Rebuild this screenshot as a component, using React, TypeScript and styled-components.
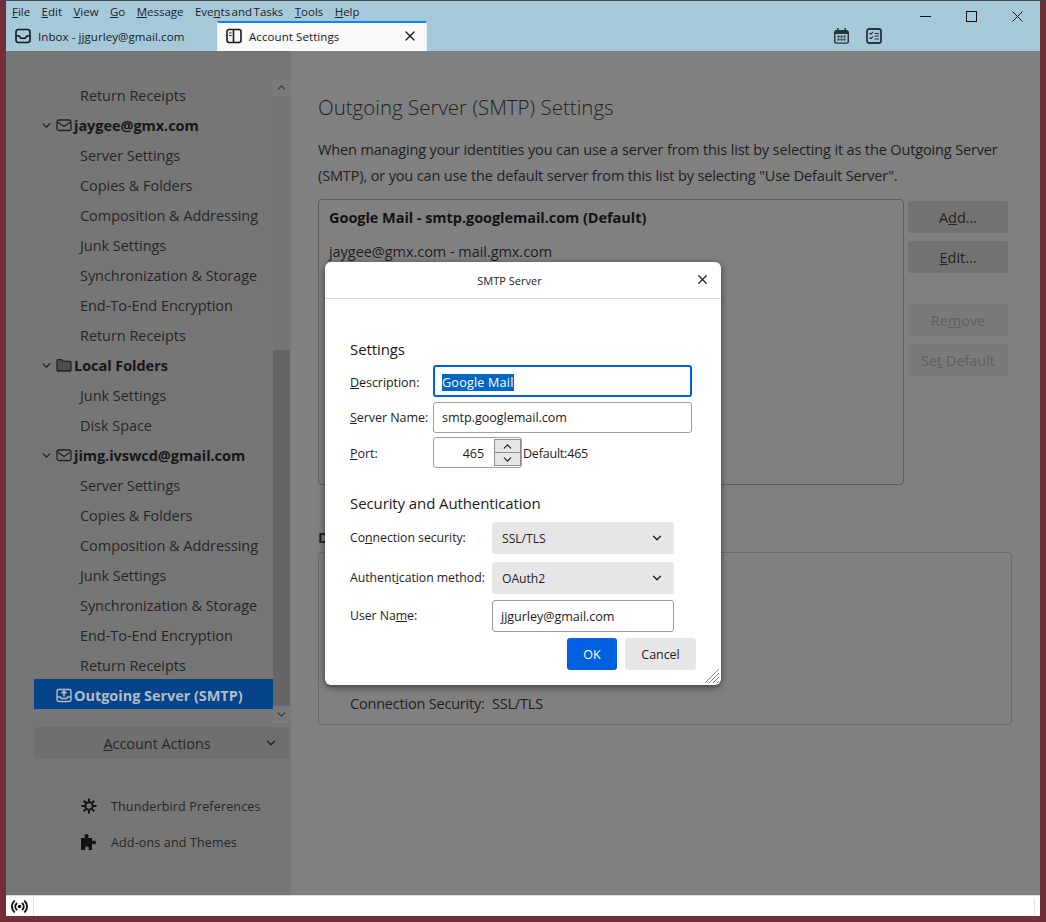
import React from "react";
import styled, { createGlobalStyle } from "styled-components";
import { ChevronDown, ChevronUp, X } from "lucide-react";

const Global = createGlobalStyle`
  html, body { margin: 0; padding: 0; background: #722e39; }
  body { font-family: "Open Sans", "Noto Sans", sans-serif; color: #1a1a1a; }
  * { box-sizing: border-box; }
`;

const Frame = styled.div`
  position: relative; width: 1046px; height: 922px; overflow: hidden;
  background: #722e39; border-top: 1px solid #3b4a50;
  padding: 0 6px 6px; display: flex; flex-direction: column;
`;
const TitleBar = styled.header`
  height: 50px; background: #a6c9da; display: grid;
  grid-template-columns: 1fr 138px; grid-template-rows: 20px 30px; flex: none;
`;
const MenuBar = styled.nav`
  display: flex; gap: 11.4px; padding-left: 6px; align-items: center;
  font-size: 11.5px; color: #1c2226; height: 20px; word-spacing: -1.5px;
`;
const WindowControls = styled.div`
  grid-column: 2; grid-row: 1 / span 2; display: flex; height: 30px;
`;
const WinButton = styled.div`
  width: 46px; height: 30px; display: flex; align-items: center; justify-content: center; color: #111;
`;
const TabStrip = styled.div`
  display: flex; align-items: flex-end; height: 30px;
`;
const Tab = styled.div<{ $active?: boolean }>`
  width: 210px; height: 30px; display: flex; align-items: center; gap: 7px; padding: 0 9px;
  font-size: 11.5px; color: #15191c; letter-spacing: 0.08px;
  ${(p) => p.$active && `
    margin-left: 1px; background: #f9f9fa; border-top: 2px solid #0a84ff;
    border-left: 1px solid #e8edf0; border-right: 1px solid #e8edf0; padding: 0 8px 2px 8px;
  `}
`;
const TabClose = styled.span`
  margin-left: auto; display: flex;
`;
const Tools = styled.div`
  margin-left: auto; margin-right: 20px; display: flex; gap: 17px; align-items: center; height: 30px;
`;
const Body = styled.div`
  flex: 1; display: flex; min-height: 0; background: #808080;
`;
const Sidebar = styled.aside`
  width: 285px; background: #767676; padding: 28px 1px 0 28px; display: flex; flex-direction: column; flex: none;
`;
const TreeArea = styled.div`
  display: flex; height: 644px; flex: none;
`;
const Tree = styled.div`
  flex: 1; overflow: hidden;
`;
const SubRow = styled.div`
  height: 30px; display: flex; align-items: center; padding: 2px 0 0 46px;
  font-size: 14.5px; letter-spacing: -0.05px; color: #262626; white-space: nowrap;
`;
const AccountRow = styled.div<{ $selected?: boolean }>`
  height: 30px; display: flex; align-items: center; padding: 2px 0 0 6px; white-space: nowrap;
  font-size: 14.5px; font-weight: 700; letter-spacing: -0.05px;
  color: ${(p) => (p.$selected ? "#b3bbc4" : "#161616")};
  background: ${(p) => (p.$selected ? "#05448a" : "transparent")};
`;
const Twisty = styled.span`
  width: 16px; display: flex; align-items: center; flex: none; color: #1c1c1c;
`;
const RowIcon = styled.span`
  width: 18px; display: flex; align-items: center; flex: none;
`;
const Scrollbar = styled.div`
  width: 17px; display: flex; flex-direction: column; flex: none;
`;
const ScrollArrow = styled.div`
  height: 17px; background: #7a7a7a; display: flex; align-items: center; justify-content: center; color: #3c3c3c; flex: none;
`;
const ScrollTrack = styled.div`
  flex: 1; display: flex; flex-direction: column; justify-content: flex-end; background: #757575;
`;
const ScrollThumb = styled.div`
  background: #666; flex: none;
`;
const ActionsButton = styled.div`
  margin-top: 4px; height: 32px; background: #6f6f6f; border-radius: 3px; display: flex; align-items: center;
  font-size: 14.5px; letter-spacing: -0.05px; color: #262626; flex: none;
`;
const ActionsLabel = styled.span`
  flex: 1; text-align: center; padding-left: 16px;
`;
const ActionsChevron = styled.span`
  display: flex; margin-right: 12px;
`;
const SideFooter = styled.div`
  margin-top: 29px; padding-left: 47px; display: flex; flex-direction: column;
`;
const FooterLink = styled.div`
  height: 36px; display: flex; align-items: center; gap: 14px; font-size: 12.5px; color: #262626; letter-spacing: 0.15px;
`;
const Content = styled.main`
  flex: 1; padding: 41px 28px 0 27px; color: #1f1f1f; min-width: 0;
`;
const PageTitle = styled.h1`
  margin: 0; font-size: 20.5px; line-height: 30px; font-weight: 300; color: #222; letter-spacing: 0;
`;
const Intro = styled.p`
  margin: 15px 0 0; font-size: 14.5px; line-height: 26px; letter-spacing: -0.14px; color: #1e1e1e; white-space: nowrap;
`;
const ServerArea = styled.div`
  margin-top: 10px; display: flex; gap: 4px;
`;
const ServerList = styled.div`
  width: 586px; height: 286px; border: 1px solid #5c5c5c; border-radius: 4px; font-size: 14.5px; letter-spacing: -0.05px;
`;
const ServerItem = styled.div<{ $default?: boolean }>`
  height: 35px; padding: 0 0 ${(p) => (p.$default ? "0" : "2px")} 10px; display: flex; align-items: center; white-space: nowrap;
  font-weight: ${(p) => (p.$default ? 700 : 400)};
  color: ${(p) => (p.$default ? "#121212" : "#1e1e1e")};
`;
const ServerButtons = styled.div`
  width: 100px; padding-top: 2px; display: flex; flex-direction: column; gap: 8px;
`;
const SideButton = styled.div<{ $disabled?: boolean; $gapBefore?: boolean }>`
  height: 32px; border-radius: 3px; display: flex; align-items: center; justify-content: center;
  font-size: 14.5px; letter-spacing: -0.05px;
  background: ${(p) => (p.$disabled ? "#7a7a7a" : "#727272")};
  color: ${(p) => (p.$disabled ? "#5f5f5f" : "#222")};
  margin-top: ${(p) => (p.$gapBefore ? "23px" : "0")};
`;
const DetailsHeading = styled.h2`
  margin: 41px 0 2px; font-size: 14.5px; line-height: 24px; font-weight: 700; color: #222;
`;
const DetailsBox = styled.div`
  width: 694px; height: 173px; border: 1px solid #6a6a6a; border-radius: 4px; display: flex; align-items: flex-end;
  padding: 0 0 11px 31px; font-size: 14.5px; letter-spacing: -0.2px; color: #1e1e1e;
`;
const DetailLabel = styled.span`
  width: 142px; white-space: nowrap;
`;
const StatusBar = styled.footer`
  height: 21px; background: #fff; border-top: 1px solid #dadada; display: flex; flex: none;
`;
const StatusCell = styled.div`
  width: 28px; border-right: 1px solid #e3e3e3; display: flex; align-items: center; justify-content: center;
`;
const StatusFill = styled.div`
  flex: 1; margin-right: 5px; border-right: 1px solid #e3e3e3; margin-top: 2px; margin-bottom: 2px;
`;
const Dialog = styled.section`
  position: absolute; left: 325px; top: 261px; width: 396px; height: 423px; background: #fff; border-radius: 6px;
  box-shadow: 0 2px 7px rgba(0,0,0,.55); color: #1d1d1d; display: flex; flex-direction: column;
`;
const DialogHeader = styled.div`
  height: 37px; border-bottom: 1px solid #d8d8d8; display: flex; align-items: center; justify-content: center; position: relative;
  padding-right: 27px; font-size: 11px; flex: none; color: #222;
`;
const DialogClose = styled.span`
  position: absolute; right: 11px; top: 10px; display: flex;
`;
const DialogForm = styled.div`
  padding: 41px 25px 0; font-size: 12.5px; letter-spacing: -0.05px; display: flex; flex-direction: column;
`;
const FormHeading = styled.h3<{ $spaced?: boolean }>`
  margin: ${(p) => (p.$spaced ? "26px 0 10px" : "0 0 7px")}; font-size: 15px; line-height: 18px; font-weight: 400; letter-spacing: -0.1px; color: #1a1a1a;
`;
const FieldRow = styled.div<{ $h: number; $mb: number; $label?: number }>`
  display: grid; grid-template-columns: ${(p) => p.$label ?? 83}px 1fr; align-items: center;
  height: ${(p) => p.$h}px; margin-bottom: ${(p) => p.$mb}px; white-space: nowrap;
`;
const FieldLabel = styled.span`
  padding-top: 2px;
`;
const SecurityLabel = styled.span`
  font-size: 12.3px; padding-bottom: 2px;
`;
const TextBox = styled.div<{ $focus?: boolean; $w: number }>`
  width: ${(p) => p.$w}px; height: 100%; border-radius: 3px; display: flex; align-items: center;
  background: #fff; font-size: 12.6px;
  padding-left: ${(p) => (p.$focus ? "7px" : "8px")};
  border: ${(p) => (p.$focus ? "2px solid #0060df" : "1px solid #a0a0a0")};
`;
const Selected = styled.span`
  background: #0066c4; color: #fff; line-height: 17px; margin-top: 2px; letter-spacing: 0.2px;
`;
const PortLine = styled.div`
  display: flex; align-items: center; height: 100%;
`;
const PortBox = styled.div`
  width: 89px; height: 100%; border: 1px solid #a0a0a0; border-radius: 3px; display: flex; align-items: center; justify-content: flex-end;
`;
const PortValue = styled.span`
  margin-right: 10px; padding-top: 2px;
`;
const Spinner = styled.div`
  width: 27px; height: 27px; border: 1px solid #8e8e8e; background: #e6e6e6; display: flex; flex-direction: column;
`;
const SpinPart = styled.div`
  flex: 1; min-height: 0; display: flex; align-items: center; justify-content: center;
  & + & { border-top: 1px solid #8e8e8e; }
`;
const PortHint = styled.span`
  margin-left: 1px; letter-spacing: -0.2px; padding-top: 2px;
`;
const SelectBox = styled.div`
  width: 182px; height: 32px; background: #e6e6e6; border-radius: 3px; display: flex; align-items: center; justify-content: space-between;
  padding: 0 10px; font-size: 12.2px;
`;
const DialogButtons = styled.div`
  display: flex; justify-content: flex-end; gap: 8px;
`;
const PrimaryButton = styled.div`
  width: 50px; height: 32px; background: #0060df; color: #fff; border-radius: 3px; display: flex; align-items: center; justify-content: center; font-size: 12.5px;
`;
const PlainButton = styled.div`
  width: 71px; height: 32px; background: #e6e6e6; border-radius: 3px; display: flex; align-items: center; justify-content: center; font-size: 12.5px;
`;
const Grip = styled.svg`
  position: absolute; right: 1px; bottom: 1px;
`;

const MailIcon = ({ c = "#222" }: { c?: string }) => (
  <svg width="16" height="16" viewBox="0 0 16 16" fill="none" stroke={c} strokeWidth="1.3">
    <rect x="1" y="3" width="14" height="10.5" rx="2" />
    <path d="M1.5 5l6.5 4.5L14.5 5" />
  </svg>
);
const FolderIcon = () => (
  <svg width="16" height="16" viewBox="0 0 16 16" fill="#4d4d4d" stroke="#222" strokeWidth="1.3">
    <path d="M1 13V3.5C1 3 1.4 2.6 2 2.6h3.4l1.4 1.7H14c.6 0 1 .4 1 1V13c0 .6-.4 1-1 1H2c-.6 0-1-.4-1-1z" />
  </svg>
);
const OutgoingIcon = () => (
  <svg width="16" height="16" viewBox="0 0 16 16" fill="none" stroke="#b3bbc4" strokeWidth="1.4">
    <rect x="1" y="2.500" width="14" height="12" rx="2" />
    <path d="M1 10h3.500l1 1.500h5l1-1.500H15" />
    <path d="M8 9.500V4.500M5.600 6.500L8 4l2.400 2.500" strokeWidth="1.600" />
  </svg>
);
const GearIcon = () => (
  <svg width="16" height="16" viewBox="0 0 16 16" fill="none" stroke="#111">
    <circle cx="8" cy="8" r="3.700" strokeWidth="2" />
    <path d="M8 .5v3M8 12.500v3M.5 8h3M12.500 8h3M2.700 2.700l2.100 2.100M11.200 11.200l2.100 2.100M2.700 13.300l2.100-2.100M11.200 4.800l2.100-2.100" strokeWidth="2" />
  </svg>
);
const PuzzleIcon = () => (
  <svg width="16" height="16" viewBox="0 0 16 16" fill="#111">
    <path d="M0 4h4.200C3.600 3.300 3.400 2.700 3.400 2 3.400.8 4.400 0 5.500 0s2.100.8 2.100 2c0 .7-.3 1.300-.8 2H11v3.200c.5-.5 1-.8 1.800-.8 1.200 0 2.200.8 2.200 2s-1 2-2.200 2c-.8 0-1.300-.3-1.800-.8V16H7.300c.4-.6.6-1.100.6-1.700 0-1-.8-1.700-2-1.700s-2 .7-2 1.700c0 .6.200 1.100.6 1.700H0z" />
  </svg>
);
const InboxTabIcon = () => (
  <svg width="16" height="16" viewBox="0 0 16 16" fill="none" stroke="#16191b" strokeWidth="1.600">
    <rect x="1" y="1.500" width="14" height="13" rx="2.500" />
    <path d="M1 8h3.200c.8 0 1 2.300 2 2.300h3.600c1 0 1.200-2.300 2-2.300H15" />
  </svg>
);
const SettingsTabIcon = () => (
  <svg width="16" height="16" viewBox="0 0 16 16" fill="none" stroke="#16191b" strokeWidth="1.600">
    <rect x="1" y="1.500" width="14" height="13" rx="2.200" />
    <path d="M7.500 1.500v13" />
    <path d="M3 5h2.600M3 7.500h2.600" strokeWidth="1.200" />
  </svg>
);
const CalendarIcon = () => (
  <svg width="15" height="16" viewBox="0 0 15 16" fill="#26343c">
    <path d="M3 0h1.500v2h6V0H12v2h.500C13.900 2 15 3 15 4.300v9.200c0 1.300-1.100 2.300-2.500 2.300h-10C1.100 15.800 0 14.800 0 13.500V4.300C0 3 1.100 2 2.500 2H3zM1.500 6v7.500c0 .5.400.9 1 .9h10c.6 0 1-.4 1-.9V6z" />
    <path d="M3.500 7.500h2v2h-2zM6.500 7.500h2v2h-2zM9.500 7.500h2v2h-2zM3.500 10.500h2v2h-2zM6.500 10.500h2v2h-2zM9.500 10.500h2v2h-2z" />
  </svg>
);
const TasksIcon = () => (
  <svg width="16" height="16" viewBox="0 0 16 16" fill="none" stroke="#26343c">
    <rect x="1" y="1" width="14" height="14" rx="2" strokeWidth="1.800" />
    <path d="M3.500 5l1.200 1.200L7 4M3.500 9.500l1.200 1.200L7 8.500" strokeWidth="1.100" />
    <path d="M8.500 5.500H13M8.500 8H13M8.500 11H13" strokeWidth="1.100" />
  </svg>
);
const RadioIcon = () => (
  <svg width="17" height="15" viewBox="0 0 16 14" fill="none" stroke="#111" strokeWidth="1.800" strokeLinecap="round">
    <circle cx="8" cy="7" r="1.700" fill="#111" stroke="none" />
    <path d="M5.200 4.200a4 4 0 0 0 0 5.600M10.800 4.200a4 4 0 0 1 0 5.600M3 2a7 7 0 0 0 0 10M13 2a7 7 0 0 1 0 10" />
  </svg>
);

const Key = styled.u`
  text-underline-offset: 1px;
`;

const accountRows = ["Server Settings", "Copies & Folders", "Composition & Addressing", "Junk Settings", "Synchronization & Storage", "End-To-End Encryption", "Return Receipts"];

export default function App() {
  return (
    <Frame>
      <Global />
      <TitleBar>
        <MenuBar>
          <span><Key>F</Key>ile</span>
          <span><Key>E</Key>dit</span>
          <span><Key>V</Key>iew</span>
          <span><Key>G</Key>o</span>
          <span><Key>M</Key>essage</span>
          <span>Eve<Key>n</Key>ts and Tasks</span>
          <span><Key>T</Key>ools</span>
          <span><Key>H</Key>elp</span>
        </MenuBar>
        <WindowControls>
          <WinButton><svg width="11" height="11" viewBox="0 0 11 11" stroke="#111"><path d="M0 5.500h11" /></svg></WinButton>
          <WinButton><svg width="11" height="11" viewBox="0 0 11 11" fill="none" stroke="#111"><rect x=".5" y=".5" width="10" height="10" /></svg></WinButton>
          <WinButton><svg width="11" height="11" viewBox="0 0 11 11" stroke="#111"><path d="M.5.500l10 10M10.500.500l-10 10" /></svg></WinButton>
        </WindowControls>
        <TabStrip>
          <Tab><InboxTabIcon /><span>Inbox - jjgurley@gmail.com</span></Tab>
          <Tab $active>
            <SettingsTabIcon /><span>Account Settings</span>
            <TabClose><X size={16} strokeWidth={2} color="#222" /></TabClose>
          </Tab>
          <Tools><CalendarIcon /><TasksIcon /></Tools>
        </TabStrip>
      </TitleBar>
      <Body>
        <Sidebar>
          <TreeArea>
            <Tree>
              <SubRow>Return Receipts</SubRow>
              <AccountRow>
                <Twisty><ChevronDown size={13} strokeWidth={2.400} /></Twisty>
                <RowIcon><MailIcon /></RowIcon>jaygee@gmx.com
              </AccountRow>
              {accountRows.map((r) => <SubRow key={"a" + r}>{r}</SubRow>)}
              <AccountRow>
                <Twisty><ChevronDown size={13} strokeWidth={2.400} /></Twisty>
                <RowIcon><FolderIcon /></RowIcon>Local Folders
              </AccountRow>
              <SubRow>Junk Settings</SubRow>
              <SubRow>Disk Space</SubRow>
              <AccountRow>
                <Twisty><ChevronDown size={13} strokeWidth={2.400} /></Twisty>
                <RowIcon><MailIcon /></RowIcon>jimg.ivswcd@gmail.com
              </AccountRow>
              {accountRows.map((r) => <SubRow key={"b" + r}>{r}</SubRow>)}
              <AccountRow $selected>
                <Twisty />
                <RowIcon><OutgoingIcon /></RowIcon>Outgoing Server (SMTP)
              </AccountRow>
            </Tree>
            <Scrollbar>
              <ScrollArrow><ChevronUp size={13} strokeWidth={2.600} /></ScrollArrow>
              <ScrollTrack><ScrollThumb style={{ height: 356 }} /></ScrollTrack>
              <ScrollArrow><ChevronDown size={13} strokeWidth={2.600} /></ScrollArrow>
            </Scrollbar>
          </TreeArea>
          <ActionsButton>
            <ActionsLabel><Key>A</Key>ccount Actions</ActionsLabel>
            <ActionsChevron><ChevronDown size={14} strokeWidth={2.200} color="#1c1c1c" /></ActionsChevron>
          </ActionsButton>
          <SideFooter>
            <FooterLink><GearIcon /><span>Thunderbird Preferences</span></FooterLink>
            <FooterLink><PuzzleIcon /><span>Add-ons and Themes</span></FooterLink>
          </SideFooter>
        </Sidebar>
        <Content>
          <PageTitle>Outgoing Server (SMTP) Settings</PageTitle>
          <Intro>
            When managing your identities you can use a server from this list by selecting it as the Outgoing Server<br />
            (SMTP), or you can use the default server from this list by selecting "Use Default Server".
          </Intro>
          <ServerArea>
            <ServerList>
              <ServerItem $default>Google Mail - smtp.googlemail.com (Default)</ServerItem>
              <ServerItem>jaygee@gmx.com - mail.gmx.com</ServerItem>
            </ServerList>
            <ServerButtons>
              <SideButton><span>A<Key>d</Key>d...</span></SideButton>
              <SideButton><span><Key>E</Key>dit...</span></SideButton>
              <SideButton $disabled $gapBefore><span>Re<Key>m</Key>ove</span></SideButton>
              <SideButton $disabled><span>Se<Key>t</Key> Default</span></SideButton>
            </ServerButtons>
          </ServerArea>
          <DetailsHeading>Details</DetailsHeading>
          <DetailsBox>
            <DetailLabel>Connection Security:</DetailLabel>
            <span>SSL/TLS</span>
          </DetailsBox>
        </Content>
      </Body>
      <StatusBar>
        <StatusCell><RadioIcon /></StatusCell>
        <StatusFill />
      </StatusBar>
      <Dialog>
        <DialogHeader>
          SMTP Server
          <DialogClose><X size={15} strokeWidth={2} color="#222" /></DialogClose>
        </DialogHeader>
        <DialogForm>
          <FormHeading>Settings</FormHeading>
          <FieldRow $h={32} $mb={5}>
            <FieldLabel><Key>D</Key>escription:</FieldLabel>
            <TextBox $focus $w={259}><Selected>Google Mail</Selected></TextBox>
          </FieldRow>
          <FieldRow $h={31} $mb={4}>
            <span><Key>S</Key>erver Name:</span>
            <TextBox $w={259}>smtp.googlemail.com</TextBox>
          </FieldRow>
          <FieldRow $h={31} $mb={0}>
            <FieldLabel><Key>P</Key>ort:</FieldLabel>
            <PortLine>
              <PortBox>
                <PortValue>465</PortValue>
                <Spinner>
                  <SpinPart><ChevronUp size={13} strokeWidth={2} /></SpinPart>
                  <SpinPart><ChevronDown size={13} strokeWidth={2} /></SpinPart>
                </Spinner>
              </PortBox>
              <PortHint>Default:465</PortHint>
            </PortLine>
          </FieldRow>
          <FormHeading $spaced>Security and Authentication</FormHeading>
          <FieldRow $h={32} $mb={8} $label={142}>
            <SecurityLabel>Co<Key>n</Key>nection security:</SecurityLabel>
            <SelectBox>SSL/TLS<ChevronDown size={14} strokeWidth={2.200} /></SelectBox>
          </FieldRow>
          <FieldRow $h={32} $mb={6} $label={142}>
            <SecurityLabel>Authent<Key>i</Key>cation method:</SecurityLabel>
            <SelectBox>OAuth2<ChevronDown size={14} strokeWidth={2.200} /></SelectBox>
          </FieldRow>
          <FieldRow $h={32} $mb={6} $label={142}>
            <SecurityLabel>User Na<Key>m</Key>e:</SecurityLabel>
            <TextBox $w={182}>jjgurley@gmail.com</TextBox>
          </FieldRow>
          <DialogButtons>
            <PrimaryButton>OK</PrimaryButton>
            <PlainButton>Cancel</PlainButton>
          </DialogButtons>
        </DialogForm>
        <Grip width="16" height="16" viewBox="0 0 16 16" stroke="#8a8a8a" strokeWidth="1">
          <path d="M1 15L15 1M5 15L15 5M9 15l6-6M13 15l2-2" />
        </Grip>
      </Dialog>
    </Frame>
  );
}
